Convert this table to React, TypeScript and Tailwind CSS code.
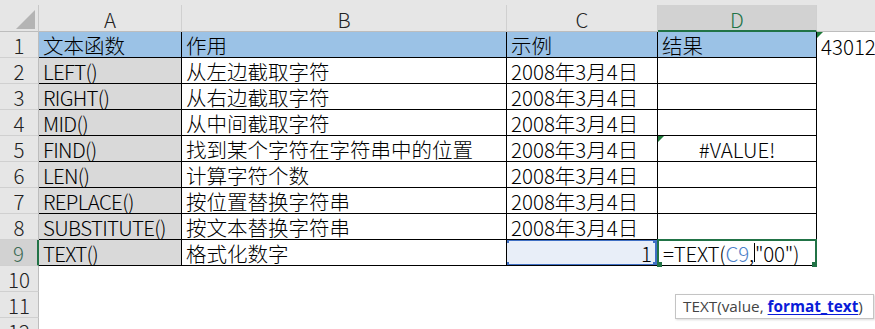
import React from "react";

const font = { fontFamily: '"Noto Sans CJK SC", "Noto Sans", sans-serif' };

type Row = { n: number; a: string; b: string; c: string; d?: string };

const rows: Row[] = [
  { n: 1, a: "文本函数", b: "作用", c: "示例", d: "结果" },
  { n: 2, a: "LEFT()", b: "从左边截取字符", c: "2008年3月4日" },
  { n: 3, a: "RIGHT()", b: "从右边截取字符", c: "2008年3月4日" },
  { n: 4, a: "MID()", b: "从中间截取字符", c: "2008年3月4日" },
  { n: 5, a: "FIND()", b: "找到某个字符在字符串中的位置", c: "2008年3月4日", d: "#VALUE!" },
  { n: 6, a: "LEN()", b: "计算字符个数", c: "2008年3月4日" },
  { n: 7, a: "REPLACE()", b: "按位置替换字符串", c: "2008年3月4日" },
  { n: 8, a: "SUBSTITUTE()", b: "按文本替换字符串", c: "2008年3月4日" },
];

const cell = "flex items-end pb-[2px] px-[4px] leading-[20px] whitespace-nowrap overflow-hidden border-r border-b border-black";

const Triangle = () => (
  <div className="absolute left-0 top-0 h-0 w-0 border-t-[6px] border-r-[6px] border-t-[#1e7a3a] border-r-transparent" />
);

const Handle = ({ className }: { className: string }) => (
  <div className={`absolute h-[5px] w-[5px] ${className}`} />
);

function RowHead({ n, active }: { n: number; active?: boolean }) {
  return (
    <div
      className={
        active
          ? "flex w-[39px] shrink-0 items-end justify-center pb-[2px] leading-[20px] bg-[#d2d2d2] text-[#3d6b55] border-r-2 border-r-[#217346] border-b border-b-[#d0d0d0]"
          : "flex w-[39px] shrink-0 items-end justify-center pb-[2px] leading-[20px] bg-[#e6e6e6] text-[#222] border-r border-r-[#bdbdbd] border-b border-b-[#d0d0d0]"
      }
    >
      {n}
    </div>
  );
}

export default function App() {
  return (
    <div className="relative h-[329px] w-[875px] overflow-hidden bg-white text-[20.5px] font-light text-black" style={font}>
      {/* column headers */}
      <div className="flex h-[32px] bg-[#e6e6e6] pt-[5px]">
        <div className="relative w-[39px] shrink-0 border-r border-b border-r-[#c8c8c8] border-b-[#bdbdbd]">
          <svg className="absolute left-[16px] top-[5px]" width="19" height="19" viewBox="0 0 19 19">
            <polygon points="19,0 19,19 0,19" fill="#b4b4b4" />
          </svg>
        </div>
        {[
          ["A", "w-[143px]"],
          ["B", "w-[325px]"],
          ["C", "w-[151px]"],
        ].map(([l, w]) => (
          <div
            key={l}
            className={`${w} flex shrink-0 items-end justify-center pb-[2px] leading-[20px] text-[#222] border-r border-b border-r-[#d0d0d0] border-b-[#bdbdbd]`}
          >
            {l}
          </div>
        ))}
        <div className="flex w-[159px] shrink-0 items-end justify-center pb-[1px] leading-[20px] bg-[#d2d2d2] text-[#217346] border-r border-r-[#d0d0d0] border-b-2 border-b-[#217346]">
          D
        </div>
        <div className="flex-1 border-b border-b-[#bdbdbd]" />
      </div>

      {rows.map((r) => (
        <div key={r.n} className="flex h-[26px]">
          <RowHead n={r.n} />
          <div
            className={`${cell} w-[143px] shrink-0 ${r.n === 1 ? "bg-[#9bc2e6]" : "bg-[#d9d9d9] tracking-[-0.7px]"}`}
          >
            {r.a}
          </div>
          <div className={`${cell} w-[325px] shrink-0 ${r.n === 1 ? "bg-[#9bc2e6]" : ""}`}>{r.b}</div>
          <div className={`${cell} w-[151px] shrink-0 ${r.n === 1 ? "bg-[#9bc2e6]" : ""}`}>{r.c}</div>
          <div
            className={`${cell} relative w-[159px] shrink-0 ${r.n === 1 ? "bg-[#9bc2e6]" : ""} ${r.n === 5 ? "justify-center" : ""}`}
          >
            {r.n === 5 && <Triangle />}
            {r.d}
          </div>
          <div className="relative flex flex-1 items-end pb-[2px] pl-[4px] leading-[20px] whitespace-nowrap">
            {r.n === 1 && (
              <>
                <Triangle />
                43012
              </>
            )}
          </div>
        </div>
      ))}

      {/* row 9 */}
      <div className="flex h-[26px]">
        <RowHead n={9} active />
        <div className={`${cell} w-[143px] shrink-0 bg-[#d9d9d9] tracking-[-0.7px]`}>TEXT()</div>
        <div className={`${cell} w-[325px] shrink-0`}>格式化数字</div>
        <div className={`${cell} relative w-[151px] shrink-0 justify-end bg-[#e8eef8] pr-[5px]`}>
          1
          <div className="absolute -left-[2px] -top-px right-0 -bottom-px border-2 border-[#3f6fc4]">
            <Handle className="-left-[3px] -top-[3px] bg-[#3f6fc4]" />
            <Handle className="-right-[3px] -top-[3px] bg-[#3f6fc4]" />
            <Handle className="-left-[3px] -bottom-[3px] bg-[#3f6fc4]" />
            <Handle className="-right-[3px] -bottom-[3px] bg-[#3f6fc4]" />
          </div>
        </div>
        <div className={`${cell} relative w-[159px] shrink-0 pl-[5px] overflow-visible tracking-[-0.2px]`}>
          <span>=TEXT(</span>
          <span className="text-[#4a80c8]">C9</span>
          <span>,</span>
          <span className="mb-[1px] inline-block h-[19px] w-px bg-black" />
          <span>"00")</span>
          <div className="absolute -left-[1px] -top-px -right-px bottom-0 border-2 border-b-0 border-[#217346]">
            <Handle className="-left-[2px] -bottom-[2px] bg-[#217346]" />
            <Handle className="-right-[2px] -bottom-[2px] bg-[#217346]" />
          </div>
        </div>
        <div className="flex-1" />
      </div>

      {[10, 11, 12].map((n) => (
        <div key={n} className="flex h-[26px]">
          <RowHead n={n} />
          <div className="flex-1" />
        </div>
      ))}

      {/* function tooltip */}
      <div
        className="absolute left-[675px] top-[294px] flex h-[25px] w-[199px] items-center border border-[#c4c4c4] bg-white pl-[7px] text-[15.3px] font-normal text-[#444] shadow-[1px_1px_2px_rgba(0,0,0,0.15)]"
        style={{ fontFamily: '"Open Sans", "Liberation Sans", sans-serif' }}
      >
        TEXT(value,&nbsp;
        <span className="font-bold text-[#0a1cd8] underline underline-offset-2">format_text</span>)
      </div>
    </div>
  );
}
